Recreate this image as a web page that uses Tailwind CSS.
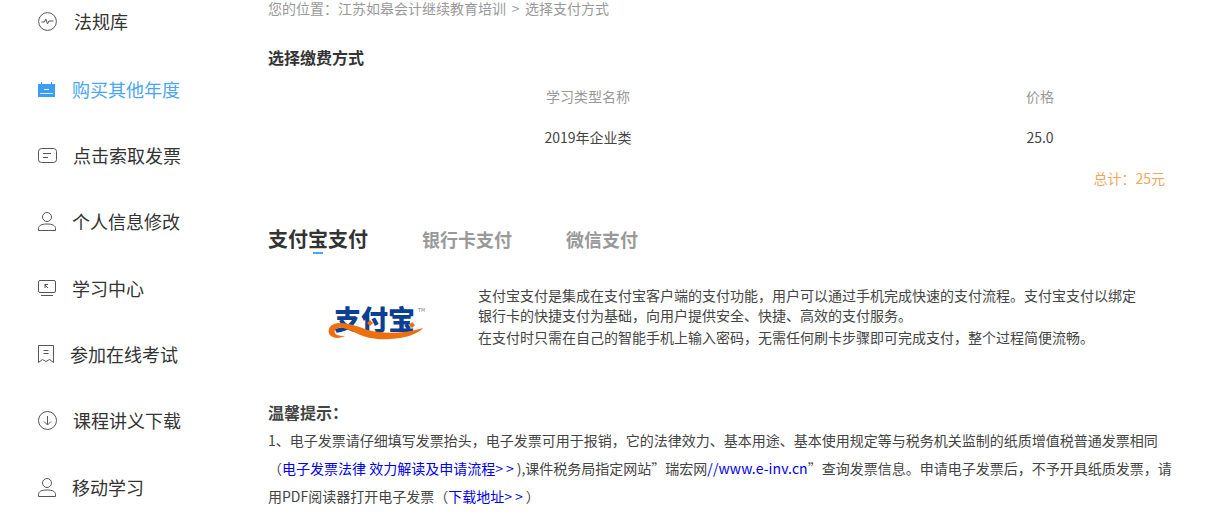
<!DOCTYPE html>
<html lang="zh">
<head>
  <meta charset="UTF-8">
  <title>选择支付方式</title>
  <script src="https://cdn.jsdelivr.net/npm/@tailwindcss/browser@4"></script>
</head>
<body class="bg-white overflow-hidden h-[518px] font-['Noto_Sans_CJK_SC','Noto_Sans',sans-serif] text-[#333]">
  <div class="flex w-[1207px] h-[518px] overflow-hidden">

    <!-- Sidebar -->
    <ul class="w-[268px] shrink-0 pl-[38px] text-[18px] leading-[24px] pt-[9px]">
      <li class="flex items-center h-[24px] mb-[44px]">
        <svg class="w-[19px] h-[19px] mr-[17px]" viewBox="0 0 19 19" fill="none" stroke="#555" stroke-width="1"><circle cx="9.500" cy="9.500" r="8.900"/><path d="M3.500 10h3l1.300-3 1.700 5 1.400-3h4.500"/></svg>
        <span>法规库</span>
      </li>
      <li class="flex items-center h-[24px] mb-[42px] text-[#4aa5f5]">
        <svg class="w-[17px] h-[15px] mr-[17px]" viewBox="0 0 17 15"><path d="M0 2h3V0h1v2h9V0h1v2h3v13H0z" fill="#3b9ef5"/><path d="M6 7.500h5" stroke="#fff"/><path d="M2 11.500h13" stroke="#fff" stroke-opacity=".8"/></svg>
        <span>购买其他年度</span>
      </li>
      <li class="flex items-center h-[24px] mb-[42px]">
        <svg class="w-[19px] h-[15px] mr-[16px]" viewBox="0 0 19 15" fill="none" stroke="#555"><rect x=".5" y=".5" width="18" height="14" rx="3"/><path d="M5 5.500h8M5 9.500h5"/></svg>
        <span>点击索取发票</span>
      </li>
      <li class="flex items-center h-[24px] mb-[43px]">
        <svg class="w-[18px] h-[19px] mr-[16px]" viewBox="0 0 18 19" fill="none" stroke="#555"><circle cx="9" cy="5" r="4.500"/><path d="M.5 18.500v-2c0-3 3-4.500 8.500-4.500s8.500 1.500 8.500 4.500v2z"/></svg>
        <span>个人信息修改</span>
      </li>
      <li class="flex items-center h-[24px] mb-[42px]">
        <svg class="w-[18px] h-[17px] mr-[16px]" viewBox="0 0 18 17" fill="none" stroke="#555"><rect x=".5" y=".5" width="17" height="12" rx="1.500"/><path d="M3 15.500h12M7 4v4M7 4.500h3M7 5l3 3"/></svg>
        <span>学习中心</span>
      </li>
      <li class="flex items-center h-[24px] mb-[42px]">
        <svg class="w-[16px] h-[18px] mr-[16px]" viewBox="0 0 16 18" fill="none" stroke="#555"><path d="M.5.5h15v17l-4-3-3.500 2-3.500-2-4 3z"/><path d="M5.500 5.500h5M5.500 8.500h5"/></svg>
        <span>参加在线考试</span>
      </li>
      <li class="flex items-center h-[24px] mb-[43px]">
        <svg class="w-[19px] h-[19px] mr-[16px]" viewBox="0 0 19 19" fill="none" stroke="#555"><circle cx="9.500" cy="9.500" r="9"/><path d="M9.500 5v8.500M6 10.500l3.500 3.500 3.500-3.500"/></svg>
        <span>课程讲义下载</span>
      </li>
      <li class="flex items-center h-[24px]">
        <svg class="w-[18px] h-[19px] mr-[16px]" viewBox="0 0 18 19" fill="none" stroke="#555"><circle cx="9" cy="5" r="4.500"/><path d="M.5 18.500v-2c0-3 3-4.500 8.500-4.500s8.500 1.500 8.500 4.500v2z"/></svg>
        <span>移动学习</span>
      </li>
    </ul>

    <!-- Main -->
    <div class="w-[910px] shrink-0">
      <p class="text-[14px] leading-[16px] text-[#999]">您的位置：江苏如皋会计继续教育培训<span class="px-[2.500px]"> &gt; </span>选择支付方式</p>

      <h2 class="mt-[30px] text-[16px] leading-[22px] font-semibold text-[#333]">选择缴费方式</h2>

      <div class="mt-[18px] w-[897px] grid grid-cols-[640px_1fr] text-[14px] text-center">
        <div class="leading-[20px] text-[#999]">学习类型名称</div>
        <div class="leading-[20px] text-[#999] w-[28px] ml-[118px] whitespace-nowrap flex justify-center">价格</div>
        <div class="mt-[21px] leading-[20px] text-[#444]">2019年企业类</div>
        <div class="mt-[21px] leading-[20px] text-[#444] w-[28px] ml-[118px] flex justify-center">25.0</div>
      </div>
      <p class="mt-[21px] w-[897px] text-right text-[14px] leading-[20px] text-[#f5a65b]">总计：25元</p>

      <!-- Tabs -->
      <div class="mt-[37px] flex items-center h-[28px] gap-[54px] text-[18px] leading-[28px] font-bold text-[#999]">
        <div class="relative text-[#333] text-[20px]">支付宝支付<span class="absolute left-[45px] top-[27px] w-[10px] h-[2px] bg-[#4aa5f5]"></span></div>
        <div>银行卡支付</div>
        <div>微信支付</div>
      </div>

      <!-- Alipay info -->
      <div class="mt-[32px] flex">
        <div class="w-[210px] shrink-0 pl-[60px] pt-[21px]">
          <div class="relative w-[98px] h-[36px]">
            <span class="absolute left-[6px] top-[-3px] text-[27px] leading-[32px] font-black text-[#0b3f91] whitespace-nowrap">支付宝</span>
            <span class="absolute left-[90px] top-[1px] text-[5px] leading-[6px] text-[#777]">TM</span>
            <svg class="absolute left-0 top-[14px]" width="98" height="24" viewBox="0 0 98 24"><path d="M95 8C75 14 55 14 40 10 28 6 15 1 6 4 0 6-1 13 3 16c4 3 10 2 14 0-7 0-12-2-10-6 2-4 11-2 21 3 10 5 20 7 34 6 16-1 28-5 33-11z" fill="#ee6f0d"/><path d="M42 0l3 3-3 3-3-3zM84 2l3 3-3 3-3-3z" fill="#ee6f0d"/></svg>
          </div>
        </div>
        <div class="text-[14px] leading-[20px] text-[#444] w-[690px]">
          <p>支付宝支付是集成在支付宝客户端的支付功能，用户可以通过手机完成快速的支付流程。支付宝支付以绑定</p>
          <p>银行卡的快捷支付为基础，向用户提供安全、快捷、高效的支付服务。</p>
          <p class="mt-[2px]">在支付时只需在自己的智能手机上输入密码，无需任何刷卡步骤即可完成支付，整个过程简便流畅。</p>
        </div>
      </div>

      <!-- Tips -->
      <h3 class="mt-[54px] text-[16px] leading-[22px] font-semibold text-[#444]">温馨提示：</h3>
      <div class="mt-[3px] w-[910px] text-[14px] leading-[28px] text-[#444]">
        <p class="whitespace-nowrap">1、电子发票请仔细填写发票抬头，电子发票可用于报销，它的法律效力、基本用途、基本使用规定等与税务机关监制的纸质增值税普通发票相同</p>
        <p class="whitespace-nowrap">（<span class="text-[#0000ee]">电子发票法律 效力解读及申请流程<span class="tracking-[3px]">&gt;&gt;</span></span>),课件税务局指定网站”瑞宏网<span class="text-[#0000ee] tracking-[0.1px]">//www.e-inv.cn</span>”查询发票信息。申请电子发票后，不予开具纸质发票，请</p>
        <p class="whitespace-nowrap">用PDF阅读器打开电子发票（<span class="text-[#0000ee]">下载地址<span class="tracking-[3px]">&gt;&gt;</span></span>）</p>
      </div>
    </div>
  </div>
</body>
</html>
